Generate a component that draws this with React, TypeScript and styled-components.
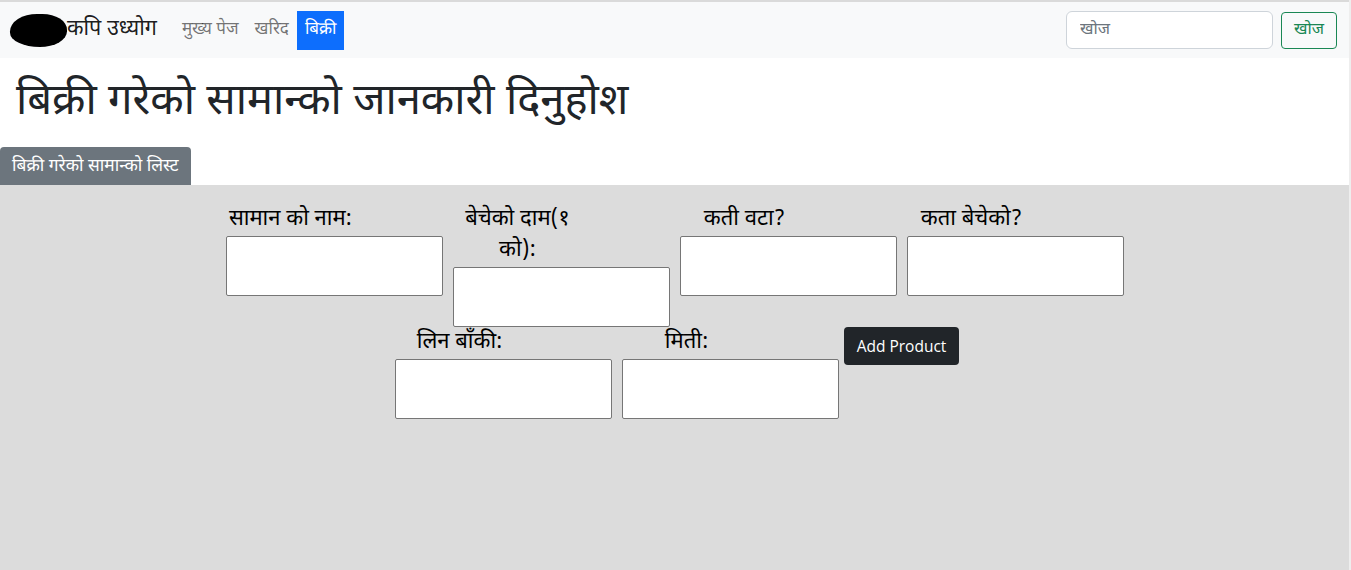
import React from "react";
import styled, { createGlobalStyle } from "styled-components";

const Global = createGlobalStyle`
  html, body { margin: 0; padding: 0; background: #eeeeee; }
  body { font-family: "Noto Sans Devanagari", "Noto Serif Devanagari", "Lohit Devanagari", "Noto Sans", sans-serif; color: #212529; }
  * { box-sizing: border-box; }
`;

const Page = styled.div`
  width: 1349px;
  height: 570px;
  border-top: 2px solid #dadada;
  display: flex;
  flex-direction: column;
  background: #fff;
`;

const Navbar = styled.nav`
  height: 56px;
  background: #f8f9fa;
  display: flex;
  align-items: center;
  padding: 0 12px 0 10px;
`;

const Brand = styled.a`
  display: flex;
  align-items: center;
  font-size: 21.5px;
  color: rgba(0, 0, 0, 0.9);
  margin-right: 17px;
  text-decoration: none;
`;

const Blob = styled.span`
  display: inline-block;
  width: 57px;
  height: 33px;
  background: #000;
  border-radius: 50% 45% 50% 55% / 55% 50% 50% 45%;
`;

const NavList = styled.div`
  display: flex;
  align-items: center;
`;

const NavLink = styled.a<{ $active?: boolean }>`
  display: block;
  padding: 8px 8px;
  font-size: 17px;
  line-height: 23px;
  color: ${(p) => (p.$active ? "#fff" : "rgba(0,0,0,0.55)")};
  background: ${(p) => (p.$active ? "#0d6efd" : "transparent")};
  text-decoration: none;
`;

const Spacer = styled.div`
  flex: 1;
`;

const SearchForm = styled.form`
  display: flex;
  align-items: center;
  gap: 8px;
`;

const SearchInput = styled.input`
  width: 207px;
  height: 38px;
  border: 1px solid #ced4da;
  border-radius: 6px;
  padding: 0 13px;
  font-size: 16.5px;
  font-family: inherit;
  background: #fff;
  &::placeholder { color: #6c757d; }
`;

const SearchButton = styled.button`
  width: 56px;
  height: 37px;
  border: 1px solid #198754;
  border-radius: 4px;
  background: transparent;
  color: #198754;
  font-size: 16.5px;
  font-family: inherit;
  padding: 0;
`;

const Header = styled.section``;

const Title = styled.h1`
  margin: 0;
  padding: 15px 16px 0;
  height: 89px;
  font-size: 43.5px;
  font-weight: 400;
  line-height: 62px;
  color: #212529;
`;

const ListButton = styled.button`
  display: block;
  height: 38px;
  padding: 0 12px;
  background: #6c757d;
  color: #fff;
  border: none;
  border-radius: 4px 4px 0 0;
  font-size: 17.4px;
  font-family: inherit;
`;

const FormArea = styled.section`
  flex: 1;
  background: #dcdcdc;
  padding-top: 19px;
`;

const FormWrap = styled.form`
  max-width: 1000px;
  margin: 0 auto;
  display: flex;
  flex-wrap: wrap;
  justify-content: center;
  align-items: flex-start;
`;

const Field = styled.div`
  margin: 0 5px;
  width: 217px;
`;

const Label = styled.label`
  display: block;
  width: 130px;
  margin-bottom: 1px;
  text-align: center;
  font-size: 22px;
  line-height: 31px;
  color: #000;
`;

const Box = styled.input`
  display: block;
  width: 217px;
  height: 60px;
  border: 1px solid #767676;
  border-radius: 2px;
  background: #fff;
`;

const AddButton = styled.button`
  height: 38px;
  padding: 0 13px;
  background: #212529;
  color: #fff;
  border: none;
  border-radius: 4px;
  font-family: "Segoe UI", "Open Sans", "Noto Sans", sans-serif;
  font-size: 15.5px;
`;

const fields = ["सामान को नाम:", "बेचेको दाम(१ को):", "कती वटा?", "कता बेचेको?", "लिन बाँकी:", "मिती:"];

export default function App() {
  return (
    <>
      <Global />
      <Page>
        <Navbar>
          <Brand href="#">
            <Blob />
            कपि उध्योग
          </Brand>
          <NavList>
            <NavLink href="#">मुख्य पेज</NavLink>
            <NavLink href="#">खरिद</NavLink>
            <NavLink href="#" $active>बिक्री</NavLink>
          </NavList>
          <Spacer />
          <SearchForm onSubmit={(e) => e.preventDefault()}>
            <SearchInput placeholder="खोज" />
            <SearchButton type="submit">खोज</SearchButton>
          </SearchForm>
        </Navbar>
        <Header>
          <Title>बिक्री गरेको सामान्को जानकारी दिनुहोश</Title>
          <ListButton>बिक्री गरेको सामान्को लिस्ट</ListButton>
        </Header>
        <FormArea>
          <FormWrap onSubmit={(e) => e.preventDefault()}>
            {fields.map((f) => (
              <Field key={f}>
                <Label>{f}</Label>
                <Box />
              </Field>
            ))}
            <AddButton type="submit">Add Product</AddButton>
          </FormWrap>
        </FormArea>
      </Page>
    </>
  );
}
